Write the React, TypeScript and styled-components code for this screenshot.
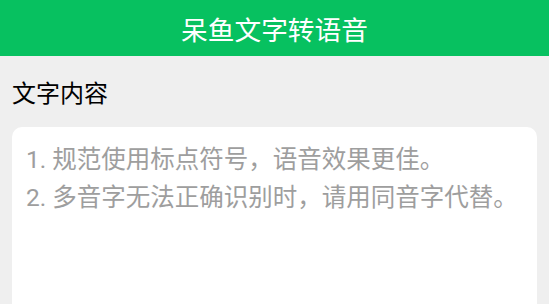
import React from "react";
import styled, { createGlobalStyle } from "styled-components";

const GlobalStyle = createGlobalStyle`
  html, body {
    margin: 0;
    padding: 0;
    background: #efefef;
    font-family: "Roboto", "Noto Sans CJK SC", sans-serif;
  }
`;

const Page = styled.div`
  display: flex;
  flex-direction: column;
  height: 100vh;
  overflow: hidden;
  background: #efefef;
`;

const Header = styled.header`
  display: flex;
  align-items: center;
  justify-content: center;
  flex-shrink: 0;
  height: 56px;
  background: #07c160;
  color: #ffffff;
  font-size: 26.7px;
`;

const Section = styled.section`
  display: flex;
  flex-direction: column;
  padding: 20px 12px 0 12px;
`;

const SectionLabel = styled.label`
  font-size: 24px;
  line-height: 36px;
  color: #000000;
  margin-bottom: 15px;
`;

const TextBox = styled.textarea`
  box-sizing: border-box;
  width: 100%;
  height: 220px;
  padding: 14px 14px;
  border: none;
  border-radius: 10px;
  background: #ffffff;
  font-family: "Roboto", "Noto Sans CJK SC", sans-serif;
  font-size: 24.5px;
  line-height: 38px;
  color: #333333;
  resize: none;
  outline: none;

  &::placeholder {
    color: #9e9e9e;
  }
`;

const hint =
  "1. 规范使用标点符号，语音效果更佳。\n2. 多音字无法正确识别时，请用同音字代替。";

export default function App() {
  return (
    <>
      <GlobalStyle />
      <Page>
        <Header>呆鱼文字转语音</Header>
        <Section>
          <SectionLabel htmlFor="content">文字内容</SectionLabel>
          <TextBox id="content" placeholder={hint} />
        </Section>
      </Page>
    </>
  );
}
